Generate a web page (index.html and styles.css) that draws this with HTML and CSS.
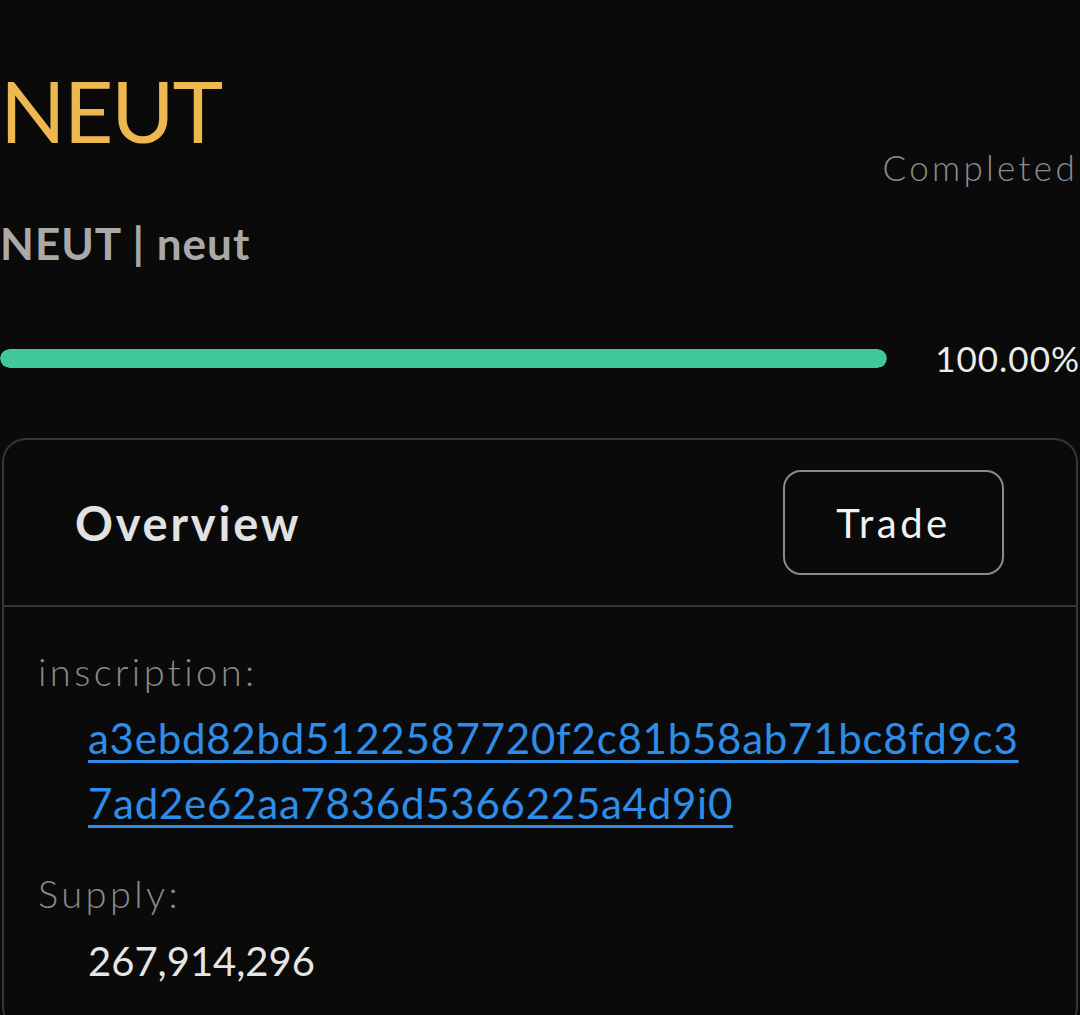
FILE: index.html
```html
<!DOCTYPE html>
<html lang="en">
<head>
<meta charset="utf-8">
<title>NEUT</title>
<link rel="stylesheet" href="styles.css">
</head>
<body>
<main class="page">
  <section class="top">
    <div class="names">
      <h1 class="title">NEUT</h1>
      <div class="subtitle">NEUT | neut</div>
    </div>
    <div class="status">Completed</div>
  </section>

  <section class="progress">
    <div class="track"><div class="fill" style="width:100%"></div></div>
    <div class="pct">100.00%</div>
  </section>

  <section class="card">
    <header class="card-head">
      <h2 class="card-title">Overview</h2>
      <button class="trade">Trade</button>
    </header>
    <div class="card-body">
      <div class="label">inscription:</div>
      <div class="value link-wrap"><a class="link" href="#">a3ebd82bd5122587720f2c81b58ab71bc8fd9c37ad2e62aa7836d5366225a4d9i0</a></div>
      <div class="label label-gap">Supply:</div>
      <div class="value number">267,914,296</div>
    </div>
  </section>
</main>
</body>
</html>
```

FILE: styles.css
```css
html, body {
  margin: 0;
  padding: 0;
  background: #0a0a0a;
  overflow: hidden;
}

body {
  font-family: Lato, "Noto Sans", sans-serif;
  color: #e6e6e6;
}

.page {
  width: 1080px;
}

.top {
  display: flex;
  justify-content: space-between;
  align-items: flex-start;
}

.title {
  margin: 60px 0 0 0;
  font-size: 86px;
  line-height: 100px;
  font-weight: 400;
  color: #ecb84f;
  letter-spacing: -2px;
}

.subtitle {
  margin-top: 57px;
  font-size: 44px;
  line-height: 52px;
  font-weight: 700;
  color: #a9a9a9;
  letter-spacing: 1px;
}

.status {
  margin-top: 147px;
  font-size: 35px;
  line-height: 40px;
  font-weight: 300;
  color: #8c8c8c;
  letter-spacing: 3.3px;
  padding-right: 2px;
}

.progress {
  margin-top: 69px;
  height: 40px;
  display: flex;
  align-items: center;
  gap: 48px;
}

.track {
  width: 888px;
  height: 19px;
  border-radius: 10px;
  overflow: hidden;
}

.fill {
  height: 100%;
  background: #3ec89b;
  border-radius: 10px;
}

.pct {
  font-size: 35px;
  line-height: 40px;
  font-weight: 400;
  color: #ececec;
  letter-spacing: 1px;
}

.card {
  margin: 60px 0 0 2px;
  width: 1072px;
  border: 2px solid #353535;
  border-radius: 24px;
  border-bottom: none;
}

.card-head {
  height: 165px;
  display: flex;
  align-items: center;
  justify-content: space-between;
  padding: 0 72px 0 71px;
  border-bottom: 2px solid #353535;
}

.card-title {
  margin: 0;
  font-size: 47px;
  font-weight: 700;
  color: #e2e2e2;
  letter-spacing: 2.8px;
}

.trade {
  width: 221px;
  height: 105px;
  background: transparent;
  border: 2px solid #8a8a8a;
  border-radius: 18px;
  font-family: Lato, "Noto Sans", sans-serif;
  font-size: 40px;
  font-weight: 400;
  color: #f2f2f2;
  letter-spacing: 3.5px;
  padding: 0;
}

.card-body {
  padding: 39px 0 40px 34px;
}

.label {
  font-size: 38px;
  line-height: 50px;
  font-weight: 300;
  color: #8a8a8a;
  letter-spacing: 3.4px;
}

.label-gap {
  margin-top: 32px;
}

.value {
  padding-left: 50px;
}

.link-wrap {
  margin-top: 10px;
  width: 945px;
  word-break: break-all;
  font-size: 42px;
  line-height: 65px;
}

.link {
  color: #2f8de8;
  text-decoration: underline;
  text-decoration-thickness: 3px;
  text-underline-offset: 6px;
  letter-spacing: 0.75px;
  font-weight: 400;
}

.number {
  margin-top: 13px;
  font-size: 40px;
  line-height: 60px;
  color: #e6e6e6;
  letter-spacing: 0;
}
```
